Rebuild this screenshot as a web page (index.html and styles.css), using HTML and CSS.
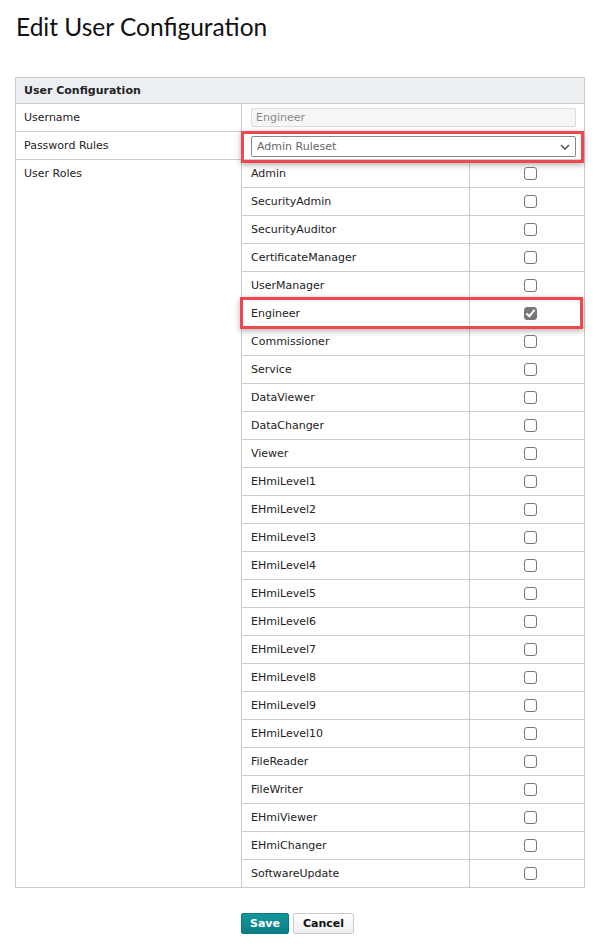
FILE: index.html
```html
<!DOCTYPE html>
<html lang="en">
<head>
    <meta charset="UTF-8">
    <title>Edit User Configuration</title>
    <link rel="stylesheet" href="styles.css">
</head>
<body>
    <h1 class="page-title">Edit User Configuration</h1>

    <table class="config">
        <colgroup>
            <col class="col-label">
            <col>
        </colgroup>
        <thead>
            <tr><th colspan="2">User Configuration</th></tr>
        </thead>
        <tbody>
            <tr>
                <td class="label">Username</td>
                <td class="field"><input type="text" class="text-input" value="Engineer" disabled></td>
            </tr>
            <tr>
                <td class="label">Password Rules</td>
                <td class="field">
                    <div class="select-box">
                        <span>Admin Ruleset</span>
                        <svg width="10" height="6" viewBox="0 0 10 6"><path d="M1 1l4 4 4-4" fill="none" stroke="#555" stroke-width="1.6"/></svg>
                    </div>
                    <div class="highlight hl-select"></div>
                </td>
            </tr>
            <tr>
                <td class="label">User Roles</td>
                <td class="nested">
                    <table class="roles" id="roles">
                        <colgroup>
                            <col class="col-role">
                            <col>
                        </colgroup>
                    </table>
                </td>
            </tr>
        </tbody>
    </table>

    <div class="actions">
        <button class="btn btn-save">Save</button>
        <button class="btn btn-cancel">Cancel</button>
    </div>

    <script>
        const roles = ['Admin', 'SecurityAdmin', 'SecurityAuditor', 'CertificateManager', 'UserManager',
            'Engineer', 'Commissioner', 'Service', 'DataViewer', 'DataChanger', 'Viewer',
            'EHmiLevel1', 'EHmiLevel2', 'EHmiLevel3', 'EHmiLevel4', 'EHmiLevel5', 'EHmiLevel6',
            'EHmiLevel7', 'EHmiLevel8', 'EHmiLevel9', 'EHmiLevel10', 'FileReader', 'FileWriter',
            'EHmiViewer', 'EHmiChanger', 'SoftwareUpdate'];

        const table = document.getElementById('roles');
        roles.forEach(role => {
            const checked = role === 'Engineer';
            const row = document.createElement('tr');
            row.innerHTML =
                '<td class="role-name">' + role + (checked ? '<div class="highlight hl-row"></div>' : '') + '</td>' +
                '<td class="role-check"><span class="checkbox' + (checked ? ' checked' : '') + '"></span></td>';
            table.appendChild(row);
        });
    </script>
</body>
</html>
```

FILE: styles.css
```css
body {
    margin: 0;
    padding: 0 15px;
    background-color: #fff;
    color: #222;
    font-family: 'DejaVu Sans', Verdana, sans-serif;
    font-size: 11px;
}

.page-title {
    font-family: Lato, 'Open Sans', sans-serif;
    font-weight: normal;
    font-size: 24.5px;
    color: #111;
    margin: 12px 0 35px 1px;
    line-height: 30px;
}

.config {
    width: 570px;
    table-layout: fixed;
    border-collapse: collapse;
    border: 1px solid #ccc;
}

.col-label {
    width: 226px;
}

.config th {
    background-color: #eceff2;
    text-align: left;
    font-weight: bold;
    height: 25px;
    padding: 0 8px;
    border-bottom: 1px solid #ccc;
}

.config td {
    border-bottom: 1px solid #ccc;
    padding: 0;
    vertical-align: top;
}

.label {
    height: 20px;
    padding: 7px 8px 0 !important;
    line-height: 13px;
    border-right: 1px solid #ccc;
}

.field {
    height: 27px;
    position: relative;
}

.text-input {
    box-sizing: border-box;
    width: 325px;
    height: 19px;
    margin: 4px 0 0 9px;
    padding: 0 4px;
    border: 1px solid #ddd;
    border-radius: 2px;
    background: #f6f6f6;
    color: #888;
    font-family: inherit;
    font-size: 11px;
}

.select-box {
    box-sizing: border-box;
    width: 325px;
    height: 21px;
    display: flex;
    align-items: center;
    justify-content: space-between;
    padding: 0 5px;
    margin: 4px 0 0 9px;
    border: 1px solid #888;
    border-radius: 2px;
    background: #fff;
    color: #666;
}

.nested {
    border-bottom: none !important;
}

.roles {
    width: 100%;
    table-layout: fixed;
    border-collapse: collapse;
}

.col-role {
    width: 227px;
}

.roles td {
    height: 27px;
    border-bottom: 1px solid #ccc;
    vertical-align: middle;
}

.roles tr:last-child td {
    border-bottom: none;
}

.role-name {
    padding: 0 0 0 9px !important;
    border-right: 1px solid #ccc;
    position: relative;
}

.role-check {
    text-align: center;
    padding-left: 7px !important;
}

.checkbox {
    display: inline-block;
    box-sizing: border-box;
    width: 13px;
    height: 13px;
    border: 1px solid #777;
    border-radius: 3px;
    background: #fff;
    vertical-align: middle;
    position: relative;
}

.checkbox.checked {
    background: #777;
    border-color: #777;
}

.checkbox.checked::after {
    content: '';
    position: absolute;
    left: 3px;
    top: 0px;
    width: 3px;
    height: 7px;
    border: solid #fff;
    border-width: 0 2px 2px 0;
    transform: rotate(40deg);
}

.highlight {
    position: absolute;
    box-sizing: border-box;
    border: 3px solid #ef4650;
    box-shadow: 0 2px 6px rgba(0, 0, 0, 0.3);
    pointer-events: none;
}

.hl-select {
    left: -1px;
    top: -1px;
    width: 343px;
    height: 32px;
}

.hl-row {
    left: -2px;
    top: -3px;
    width: 343px;
    height: 32px;
}

.actions {
    display: flex;
    gap: 4px;
    margin: 25px 0 0 226px;
}

.btn {
    height: 21px;
    border-radius: 2px;
    font-family: inherit;
    font-size: 11px;
    font-weight: bold;
    cursor: pointer;
    padding: 0 8px;
}

.btn-save {
    background: linear-gradient(#14969c, #0a7f85);
    color: #fff;
    border: 1px solid #0a7a80;
}

.btn-cancel {
    background: linear-gradient(#fff, #eceef0);
    color: #111;
    border: 1px solid #ccc;
    padding: 0 9px;
}
```
